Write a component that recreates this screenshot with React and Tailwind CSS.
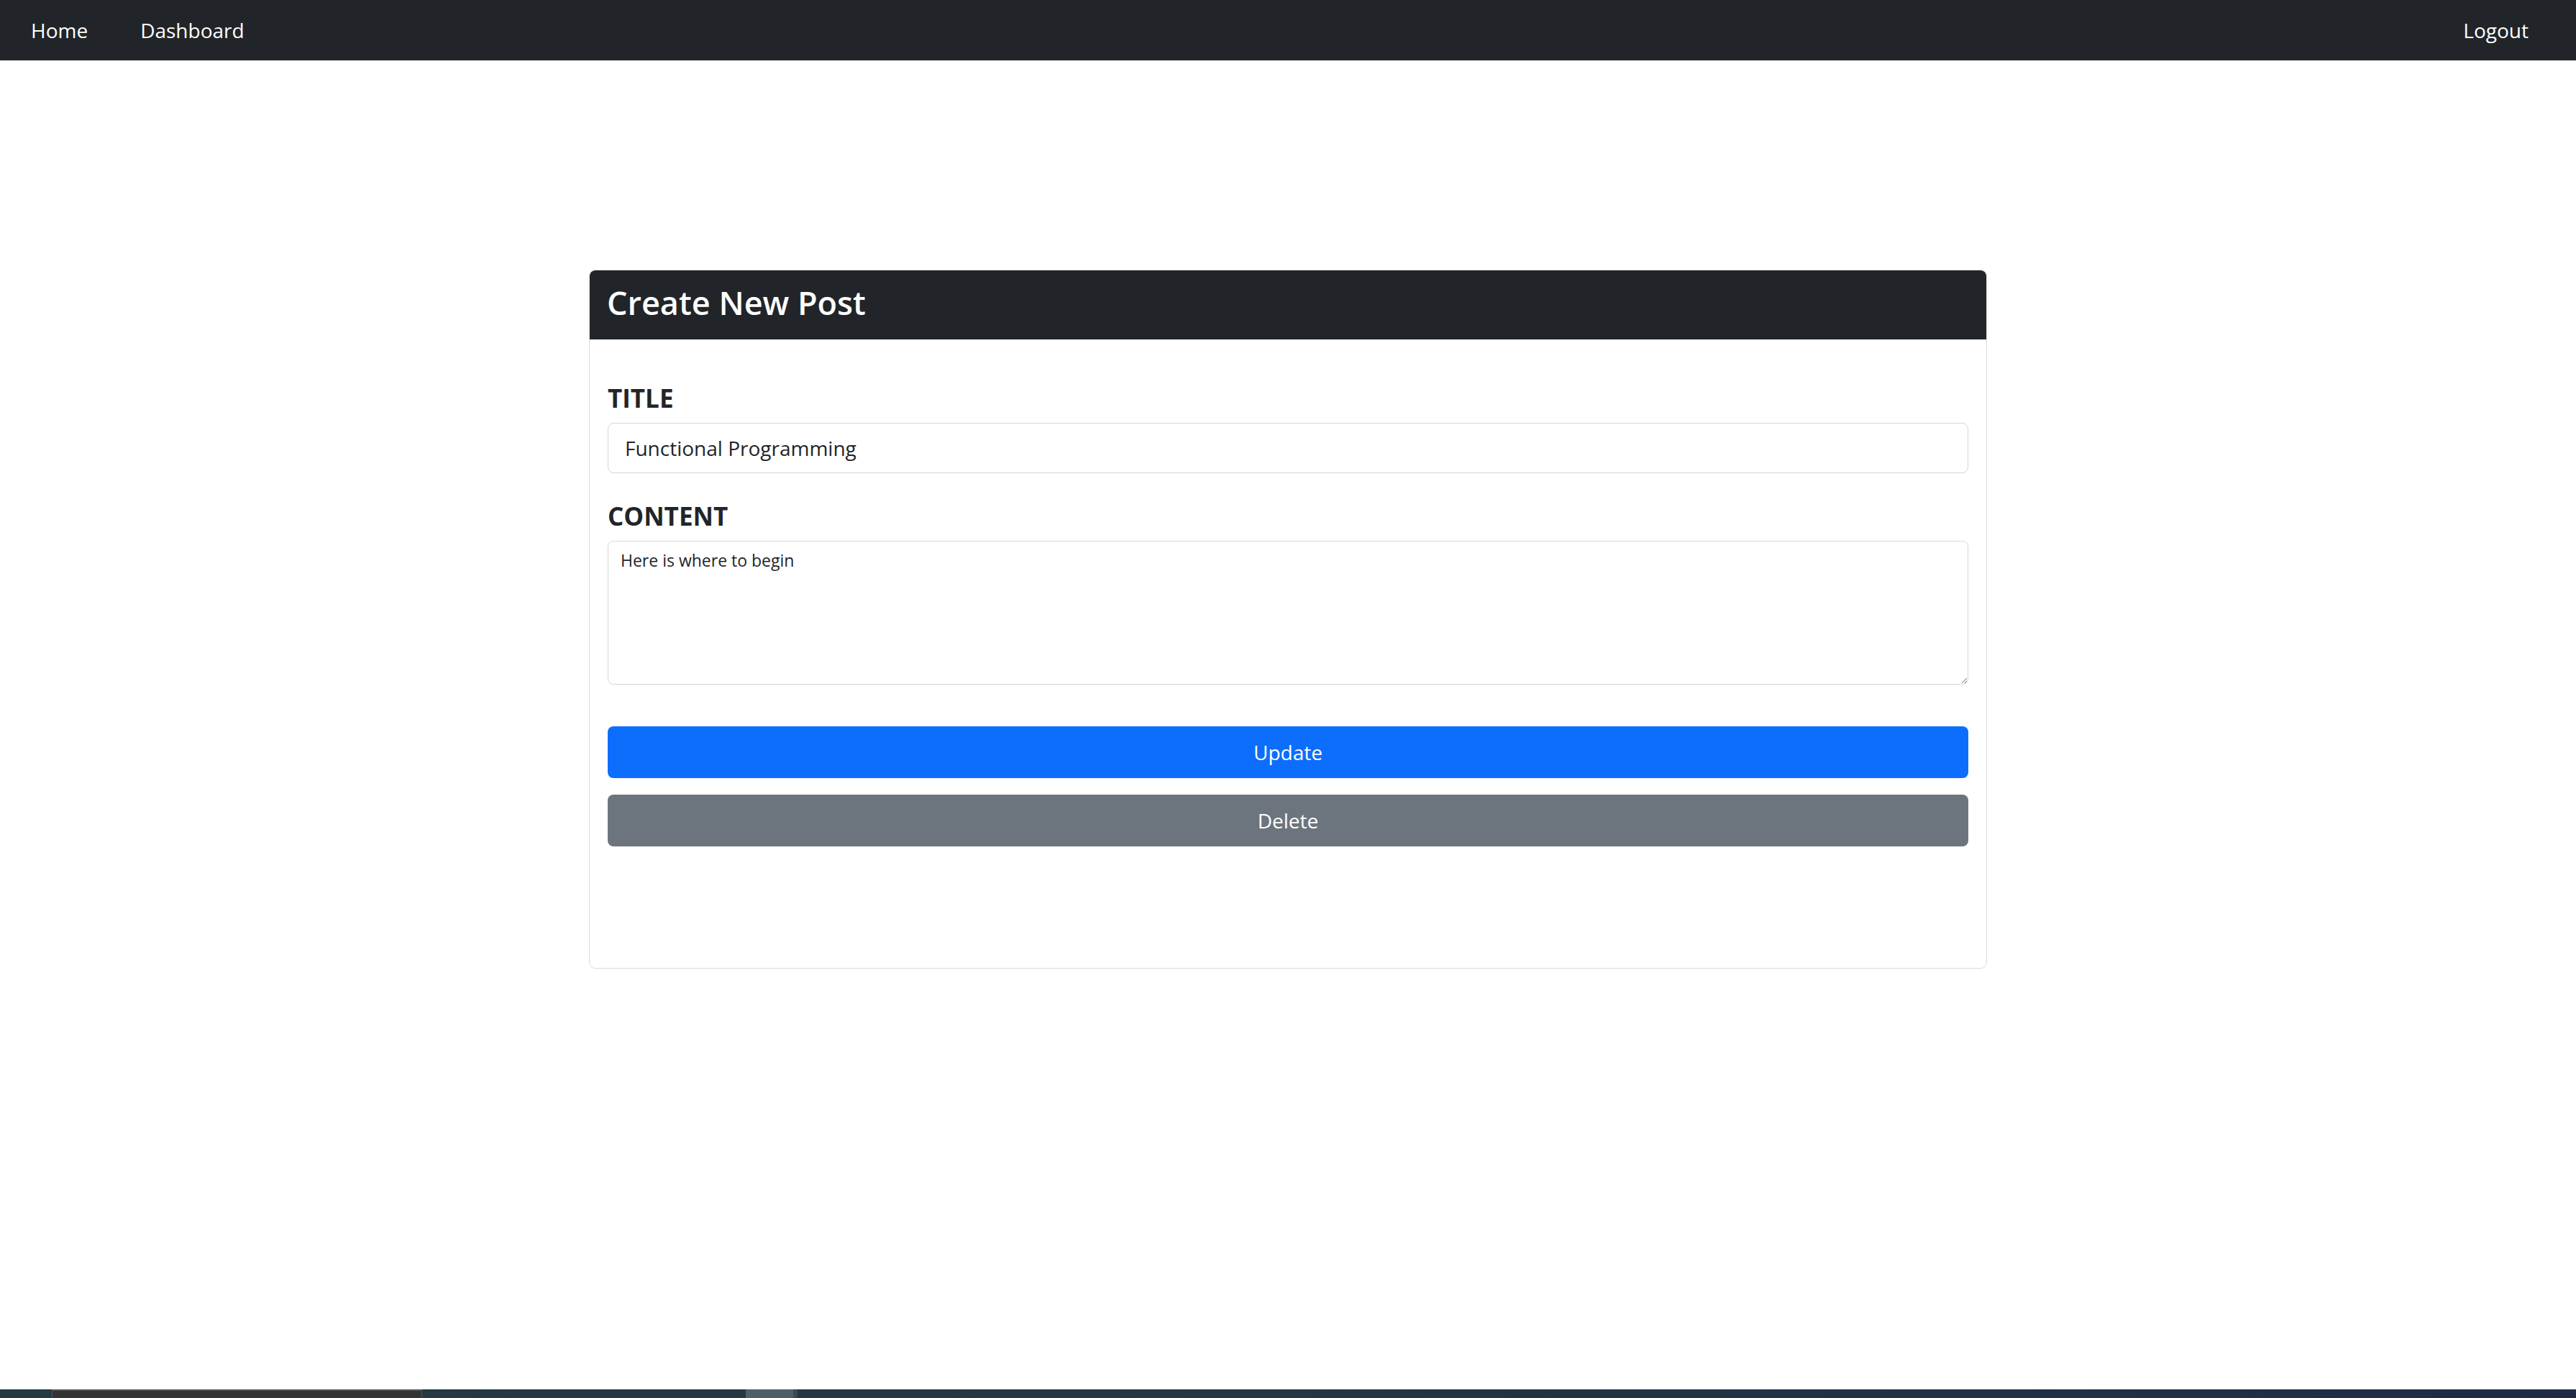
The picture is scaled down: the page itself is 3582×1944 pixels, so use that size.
import React, { useState } from 'react'

const App = () => {
  const [title, setTitle] = useState("Functional Programming")
  const [content, setContent] = useState("Here is where to begin")

  return (
    <div className='h-screen flex flex-col bg-white text-[#212529] font-["Open_Sans","Noto_Sans",sans-serif]'>
      {/* Navbar */}
      <nav className='h-[84px] bg-[#212529] flex items-center justify-between text-white text-[28px] shrink-0'>
        <div className='flex items-center gap-[73px] pl-[43px]'>
          <a className='leading-none'>Home</a>
          <a className='leading-none'>Dashboard</a>
        </div>
        <a className='pr-[66px] leading-none'>Logout</a>
      </nav>

      <main className='flex-1'>
        <div className='mt-[291px] mx-auto w-[1944px] border border-[#dcdcdc] rounded-[9px] overflow-hidden'>
          <div className='h-[96px] bg-[#212529] flex items-center pl-[24px] pb-[8px]'>
            <h2 className='text-white text-[45px] font-semibold leading-none'>Create New Post</h2>
          </div>

          <form onSubmit={(e) => e.preventDefault()} className='px-[25px] pt-[62px] pb-[169px]'>
            <label className='block text-[35px] font-bold leading-[40px] mb-[14px]'>TITLE</label>
            <input
              type='text'
              value={title}
              onChange={(e) => setTitle(e.target.value)}
              className='block w-full h-[70px] border border-[#d3d7db] rounded-[8px] px-[23px] text-[28px] text-[#212529] outline-none'
            />

            <label className='block text-[35px] font-bold leading-[40px] mt-[40px] mb-[14px]'>CONTENT</label>
            <textarea
              value={content}
              onChange={(e) => setContent(e.target.value)}
              className='block w-full h-[200px] border border-[#d3d7db] rounded-[8px] pl-[17px] pr-[12px] pt-[12px] text-[23px] leading-[28px] text-[#212529] outline-none'
            />

            <button className='mt-[58px] w-full h-[72px] bg-[#0d6efd] text-white text-[28px] rounded-[8px]'>
              Update
            </button>
            <button type='button' className='mt-[23px] w-full h-[72px] bg-[#6c757d] text-white text-[28px] rounded-[8px]'>
              Delete
            </button>
          </form>
        </div>
      </main>

      {/* taskbar strip at the bottom edge */}
      <div className='h-[12px] shrink-0 flex bg-gradient-to-r from-[#243a42] via-[#233642] to-[#1f2b47]'>
        <div className='w-[72px]'></div>
        <div className='w-[515px] bg-[#333333] border-t-2 border-x border-[#555555]'></div>
        <div className='w-[450px]'></div>
        <div className='w-[66px] bg-[#4f5f66]'></div>
        <div className='w-[6px] bg-[#3b4a50]'></div>
        <div className='flex-1'></div>
      </div>
    </div>
  )
}

export default App
